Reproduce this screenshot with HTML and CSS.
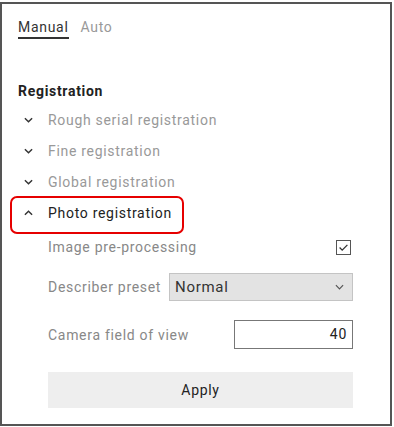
FILE: index.html
```html
<!DOCTYPE html>
<html lang="en">
<head>
    <meta charset="UTF-8">
    <meta name="viewport" content="width=device-width, initial-scale=1.0">
    <title>Registration settings</title>
    <link rel="stylesheet" href="styles.css">
</head>
<body>
    <div class="panel">
        <div class="tabs">
            <span class="tab active">Manual</span>
            <span class="tab">Auto</span>
        </div>

        <h2 class="section-title">Registration</h2>

        <ul class="steps">
            <li class="step">
                <svg class="chevron" viewBox="0 0 10 6"><path d="M1 1l4 4 4-4"/></svg>
                Rough serial registration
            </li>
            <li class="step">
                <svg class="chevron" viewBox="0 0 10 6"><path d="M1 1l4 4 4-4"/></svg>
                Fine registration
            </li>
            <li class="step">
                <svg class="chevron" viewBox="0 0 10 6"><path d="M1 1l4 4 4-4"/></svg>
                Global registration
            </li>
            <li class="step open">
                <svg class="chevron" viewBox="0 0 10 6"><path d="M1 5l4-4 4 4"/></svg>
                Photo registration
                <span class="highlight"></span>
            </li>
        </ul>

        <div class="settings">
            <div class="field check-row">
                <span class="label">Image pre-processing</span>
                <span class="checkbox">
                    <svg viewBox="0 0 15 15"><path d="M3 7.5l3 3 6-6"/></svg>
                </span>
            </div>
            <div class="field select-row">
                <span class="label">Describer preset</span>
                <div class="select">
                    <span>Normal</span>
                    <svg class="select-arrow" viewBox="0 0 10 6"><path d="M1 1l4 4 4-4"/></svg>
                </div>
            </div>
            <div class="field input-row">
                <span class="label">Camera field of view</span>
                <div class="number-input">40</div>
            </div>
            <button class="apply">Apply</button>
        </div>
    </div>
</body>
</html>
```

FILE: styles.css
```css
* {
    margin: 0;
    padding: 0;
    box-sizing: border-box;
    font-family: Roboto, "Noto Sans", sans-serif;
    letter-spacing: 0.7px;
}

body {
    background: white;
    color: #222;
    font-size: 14px;
}

.panel {
    margin-top: 2px;
    width: 392px;
    height: 424px;
    border: 2px solid #555;
    padding: 0 37px 0 16px;
}

.tabs {
    display: flex;
    gap: 12px;
    margin-top: 13px;
}

.tab {
    line-height: 20px;
    color: #999;
    border-bottom: 2px solid transparent;
}

.tab.active {
    color: #333;
    border-bottom-color: #333;
}

.section-title {
    margin-top: 42px;
    font-size: 14px;
    font-weight: bold;
    line-height: 20px;
    color: #222;
}

.steps {
    list-style: none;
    margin-top: 3px;
}

.step {
    position: relative;
    display: flex;
    align-items: center;
    gap: 15px;
    height: 31px;
    padding-left: 6px;
    color: #999;
}

.step.open {
    color: #222;
}

.chevron {
    width: 9px;
    height: 6px;
    fill: none;
    stroke: #333;
    stroke-width: 1.6;
}

.highlight {
    position: absolute;
    left: -8px;
    top: -1px;
    width: 174px;
    height: 38px;
    border: 2px solid #e60000;
    border-radius: 7px;
}

.settings {
    margin-left: 30px;
    display: flex;
    flex-direction: column;
}

.field {
    display: flex;
    align-items: center;
    justify-content: space-between;
}

.label {
    color: #888;
}

.check-row {
    margin-top: 7px;
    height: 24px;
    padding-right: 2px;
}

.checkbox {
    width: 15px;
    height: 15px;
    border: 1px solid #555;
    display: flex;
}

.checkbox svg {
    width: 13px;
    height: 13px;
    fill: none;
    stroke: #333;
    stroke-width: 1.5;
}

.select-row {
    margin-top: 14px;
}

.select {
    width: 184px;
    height: 28px;
    background: #e3e3e3;
    border: 1px solid #c4c4c4;
    display: flex;
    align-items: center;
    justify-content: space-between;
    padding: 0 8px 0 5px;
    color: #333;
    font-size: 15px;
    letter-spacing: 0.3px;
}

.select-arrow {
    width: 9px;
    height: 6px;
    fill: none;
    stroke: #555;
    stroke-width: 1.3;
}

.input-row {
    margin-top: 19px;
}

.number-input {
    width: 119px;
    height: 29px;
    border: 1px solid #777;
    text-align: right;
    line-height: 27px;
    padding-right: 5px;
    color: #222;
}

.apply {
    margin-top: 23px;
    height: 36px;
    width: 100%;
    background: #eeeeee;
    border: none;
    font-size: 14px;
    color: #222;
}
```
